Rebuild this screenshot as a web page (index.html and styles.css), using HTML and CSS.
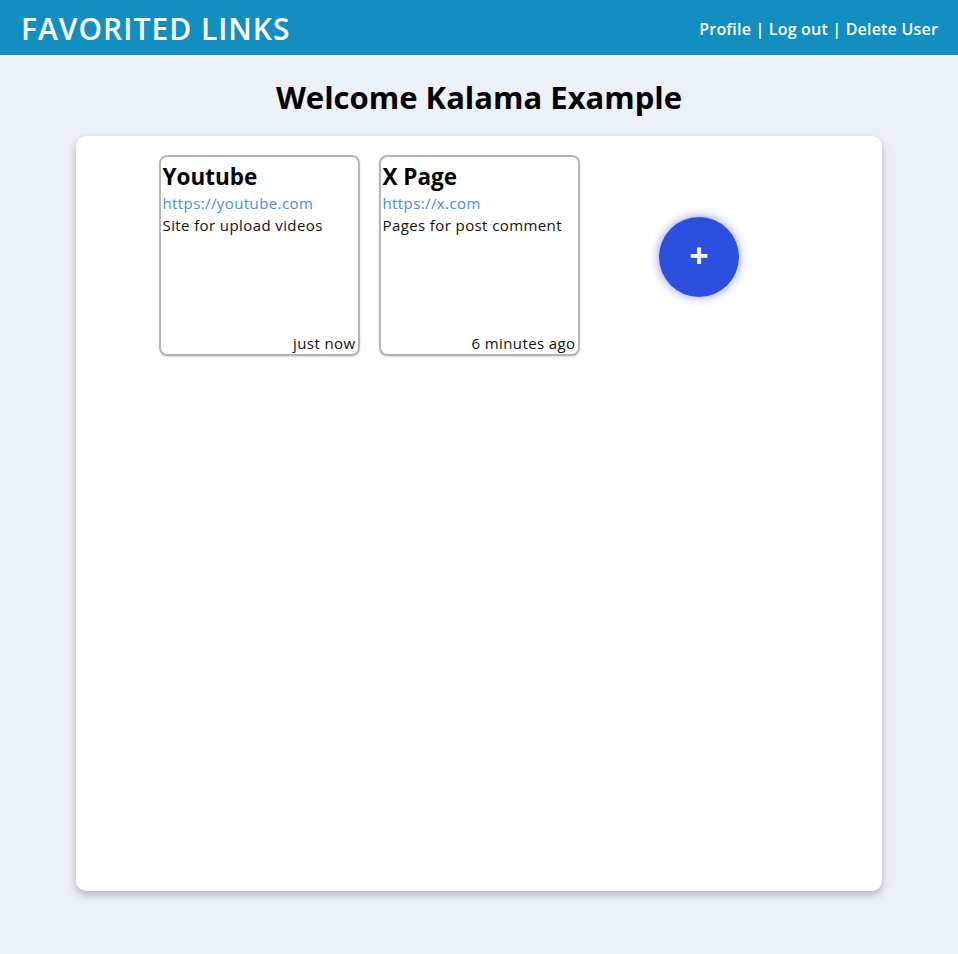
FILE: index.html
```html
<!DOCTYPE html>
<html>
<head>
<meta charset="utf-8">
<link rel="stylesheet" href="styles.css">
</head>
<body>
<header class="topbar">
  <div class="brand">FAVORITED LINKS</div>
  <nav class="nav"><a>Profile</a> | <a>Log out</a> | <a>Delete User</a></nav>
</header>
<h1 class="welcome">Welcome Kalama Example</h1>
<main class="panel">
  <div class="grid">
    <div class="card">
      <div class="card-title">Youtube</div>
      <a class="card-link">https://youtube.com</a>
      <div class="card-desc">Site for upload videos</div>
      <div class="card-time">just now</div>
    </div>
    <div class="card">
      <div class="card-title">X Page</div>
      <a class="card-link">https://x.com</a>
      <div class="card-desc">Pages for post comment</div>
      <div class="card-time">6 minutes ago</div>
    </div>
    <div class="add-cell">
      <button class="fab">+</button>
    </div>
  </div>
</main>
</body>
</html>
```
FILE: styles.css
```css
* { box-sizing: border-box; }
html, body { margin: 0; padding: 0; }
body {
  background: #ecf1f7;
  font-family: "Open Sans", "Noto Sans", sans-serif;
  color: #000;
  height: 954px;
}
.topbar {
  height: 55px;
  background: #128fc0;
  display: flex;
  align-items: center;
  justify-content: space-between;
  padding: 0 20px 0 21px;
  color: #fff;
}
.brand {
  font-size: 30px;
  font-weight: 600;
  letter-spacing: 1px;
  padding-top: 2px;
}
.nav {
  font-size: 16px;
  font-weight: 600;
  letter-spacing: 0.2px;
  padding-top: 2px;
}
.welcome {
  margin: 24px 0 0;
  text-align: center;
  font-size: 31px;
  font-weight: 700;
  line-height: 36px;
}
.panel {
  margin: 21px 76px 0;
  height: 755px;
  background: #fff;
  border-radius: 10px;
  box-shadow: 0 4px 8px rgba(0,0,0,0.25);
  padding-top: 19px;
}
.grid {
  display: grid;
  grid-template-columns: repeat(3, 201px);
  grid-auto-rows: 201px;
  gap: 19px;
  justify-content: center;
}
.card {
  border: 2px solid #b5b5b5;
  border-radius: 8px;
  padding: 5px 2px 1px 2px;
  display: flex;
  flex-direction: column;
  box-shadow: 0 1px 2px rgba(0,0,0,0.15);
}
.card-title {
  font-size: 22.5px;
  font-weight: 700;
  line-height: 30px;
}
.card-link {
  color: #4a8fdc;
  font-size: 15px;
  line-height: 22px;
  letter-spacing: 0.4px;
}
.card-desc {
  font-size: 15px;
  line-height: 22px;
  letter-spacing: 0.4px;
  color: #111;
}
.card-time {
  margin-top: auto;
  text-align: right;
  font-size: 15px;
  line-height: 20px;
  letter-spacing: 0.4px;
  color: #111;
}
.add-cell {
  display: flex;
  align-items: center;
  justify-content: center;
}
.fab {
  width: 80px;
  height: 80px;
  border-radius: 50%;
  border: none;
  background: #2c4fe0;
  color: #fff;
  font-family: inherit;
  font-size: 34px;
  font-weight: 700;
  line-height: 1;
  padding: 0 0 4px;
  margin-top: 3px;
  box-shadow: 0 0 8px 2px rgba(80,90,240,0.45);
}
```
